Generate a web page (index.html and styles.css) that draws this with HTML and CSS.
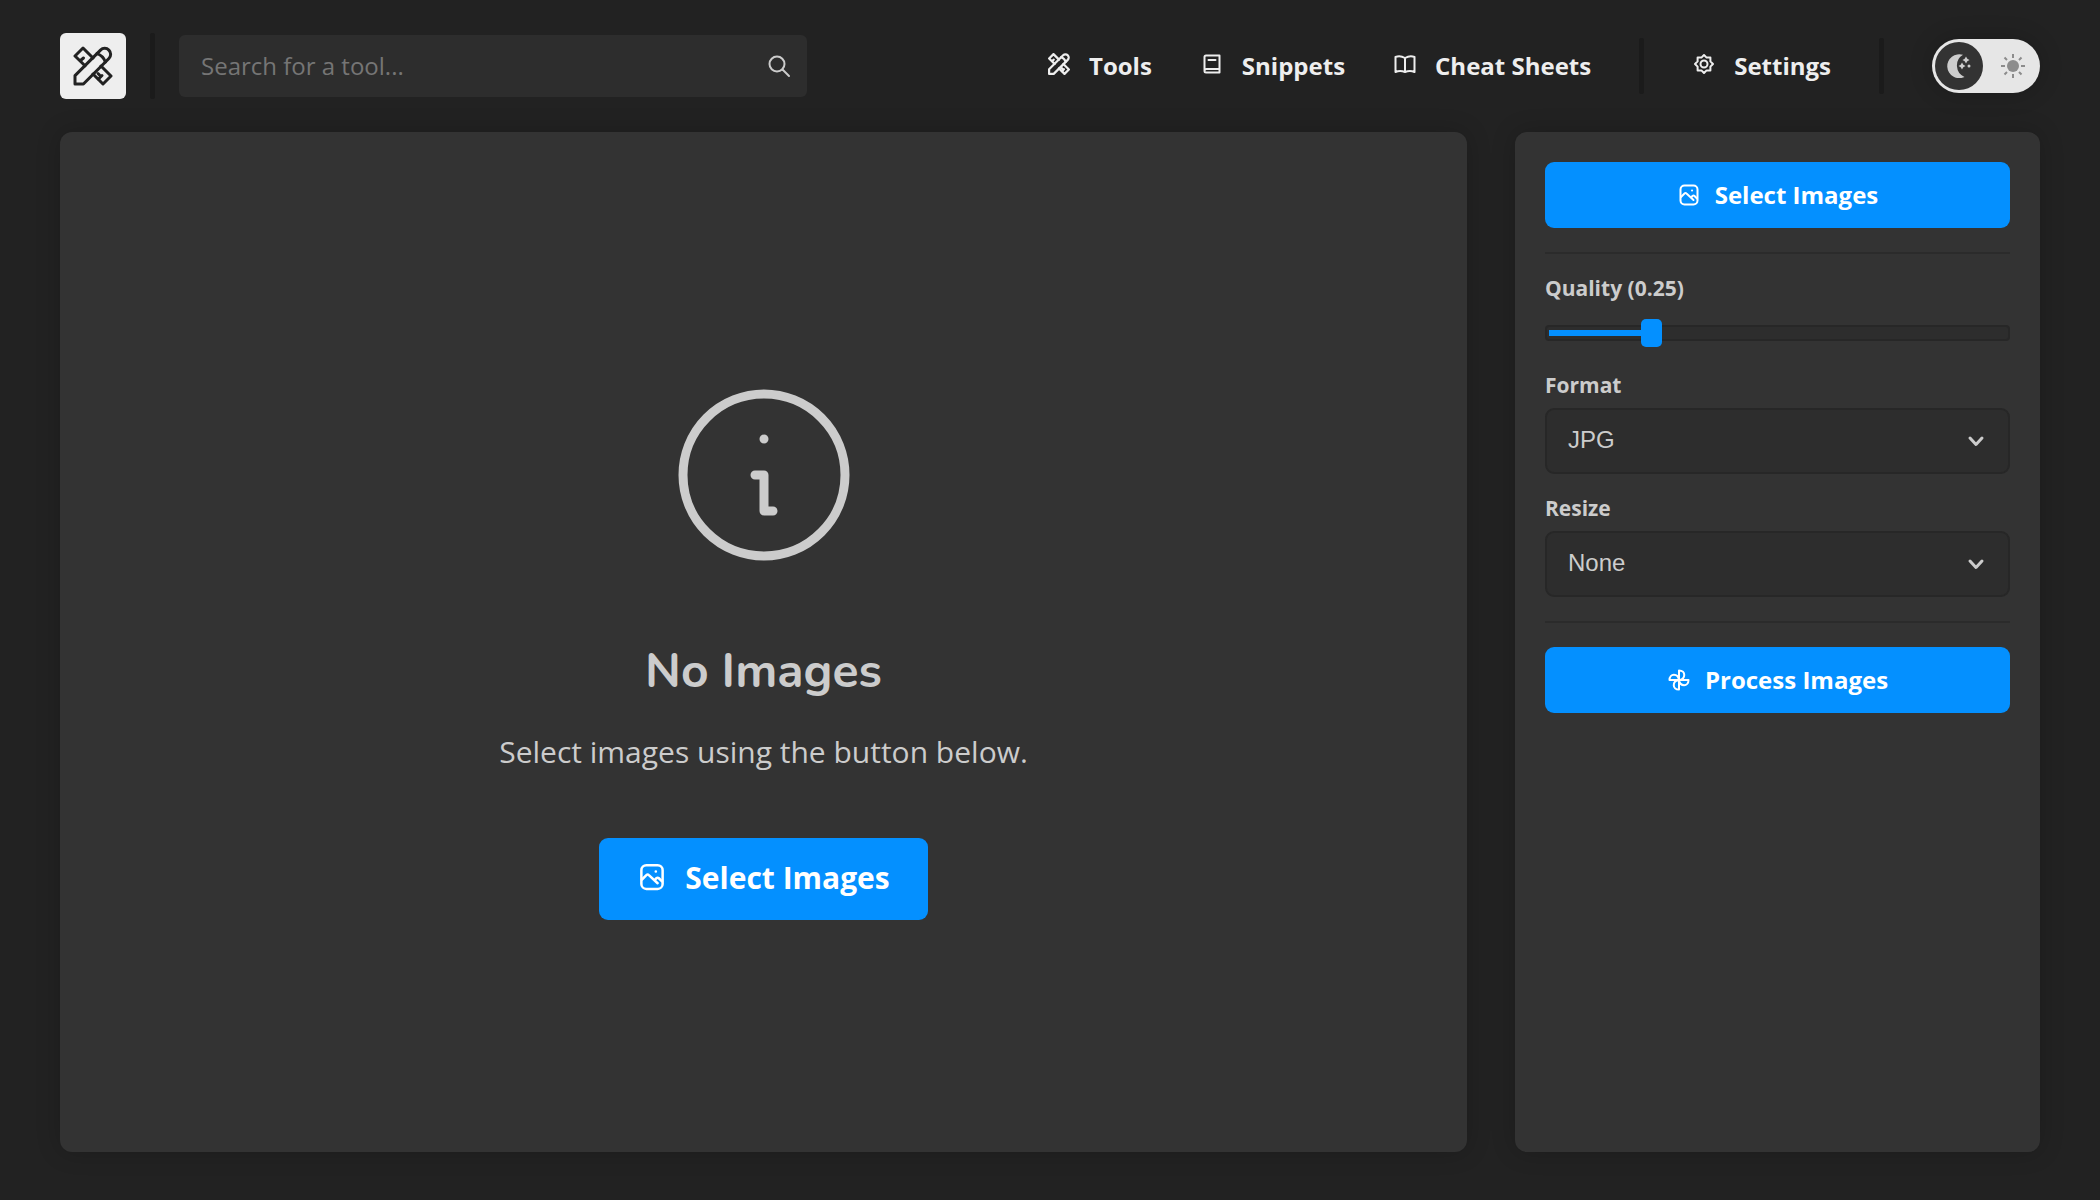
FILE: index.html
```html
<!DOCTYPE html>
<html lang="en">
<head>
<meta charset="utf-8">
<title>Image Converter</title>
<meta name="viewport" content="width=device-width, initial-scale=1">
<link rel="stylesheet" href="styles.css">
</head>
<body>
<svg class="sprite" aria-hidden="true">
  <symbol id="i-tools" viewBox="0 0 40 40">
    <path d="M2 38V29.600L27.500 4.100A5.900 5.900 0 0 1 35.900 12.500L10.400 38Z"/>
    <path d="M24 7.600Q30 9.500 32.400 16"/>
    <path d="M12 19.800L2 10L10 2L20 12"/>
    <path d="M28 20L38 30L30 38L20 28"/>
    <path d="M7.500 14.500L10.500 12M25.500 33L29 29.500M25 27.500L26.500 29"/>
  </symbol>
  <symbol id="i-book" viewBox="0 0 24 24">
    <path d="M4.500 19V5Q4.500 3.500 6 3.500H19.500V20.500H6Q4.500 20.500 4.500 19Q4.500 17 6.500 17H19.500M8.500 8H15.500"/>
  </symbol>
  <symbol id="i-open" viewBox="0 0 24 24">
    <path d="M12 6V20M12 6Q7 3 2.500 5V20Q7 18 12 20Q17 18 21.500 20V5Q17 3 12 6Z"/>
  </symbol>
  <symbol id="i-gear" viewBox="0 0 24 24">
    <circle cx="12" cy="12" r="3.500"/>
    <path d="M12 3L14.600 5.600L18.400 5.600L18.400 9.400L21 12L18.400 14.600L18.400 18.400L14.600 18.400L12 21L9.400 18.400L5.600 18.400L5.600 14.600L3 12L5.600 9.400L5.600 5.600L9.400 5.600Z"/>
  </symbol>
  <symbol id="i-image" viewBox="0 0 24 24">
    <rect x="3.500" y="2.500" width="17" height="19" rx="4"/>
    <path d="M4 14L7.500 10.500Q8.500 9.500 9.500 10.500L16.500 17M14 14.500L15.500 13Q16.500 12 17.500 13L20 15.500M15 7.500H15.100"/>
  </symbol>
  <symbol id="i-fan" viewBox="0 0 24 24">
    <path d="M12 12V2.500C19 2.500 19 11 12 12ZM12 12H21.500C21.500 19 13 19 12 12ZM12 12V21.500C5 21.500 5 13 12 12ZM12 12H2.500C2.500 5 11 5 12 12Z"/>
  </symbol>
  <symbol id="i-chevron" viewBox="0 0 24 24">
    <path d="M6 9L12 15.500L18 9"/>
  </symbol>
</svg>

<header class="header">
  <a class="logo" href="#" aria-label="Home"><svg class="logo-icon"><use href="#i-tools"/></svg></a>
  <span class="divider divider-tall"></span>
  <form class="search">
    <input class="search-input" type="text" placeholder="Search for a tool..." aria-label="Search for a tool">
    <button class="search-button" type="button" aria-label="Search">
      <svg class="search-icon" viewBox="0 0 24 24"><circle cx="10" cy="10" r="7.500"/><path d="M15.500 15.500L22 22"/></svg>
    </button>
  </form>
  <nav class="nav">
    <a class="nav-link" href="#"><svg class="icon icon-tools"><use href="#i-tools"/></svg>Tools</a>
    <a class="nav-link" href="#"><svg class="icon"><use href="#i-book"/></svg>Snippets</a>
    <a class="nav-link" href="#"><svg class="icon"><use href="#i-open"/></svg>Cheat Sheets</a>
    <span class="divider"></span>
    <a class="nav-link" href="#"><svg class="icon"><use href="#i-gear"/></svg>Settings</a>
    <span class="divider"></span>
    <button class="theme" type="button" aria-label="Toggle theme">
      <span class="theme-knob">
        <svg class="theme-icon" viewBox="0 0 24 24"><path d="M16 .800A12 12 0 1 0 17.500 23A12.500 12.500 0 0 1 16 .800Z"/><path d="M19 2.500L20.300 4.700L22.500 6L20.300 7.300L19 9.500L17.700 7.300L15.500 6L17.700 4.700ZM15 8.500L16.300 10.700L18.500 12L16.300 13.300L15 15.500L13.700 13.300L11.500 12L13.700 10.700Z"/><circle cx="22" cy="12" r="1.500"/></svg>
      </span>
      <svg class="theme-icon theme-sun" viewBox="0 0 24 24"><circle cx="12" cy="12" r="6"/><path class="rays" d="M12 0V4M12 20V24M0 12H4M20 12H24M3.500 3.500L6 6M18 18L20.500 20.500M3.500 20.500L6 18M18 6L20.500 3.500"/></svg>
    </button>
  </nav>
</header>

<div class="layout">
  <main class="panel empty">
    <svg class="empty-icon" viewBox="0 0 20 20"><circle cx="10" cy="10" r="9"/><path d="M10 6V6M9 10H10V14H11"/></svg>
    <h1 class="empty-title">No Images</h1>
    <p class="empty-text">Select images using the button below.</p>
    <button class="button button-large" type="button"><svg class="icon"><use href="#i-image"/></svg>Select Images</button>
  </main>
  <aside class="panel sidebar">
    <button class="button" type="button"><svg class="icon"><use href="#i-image"/></svg>Select Images</button>
    <hr class="rule">
    <label class="label" for="quality">Quality (0.25)</label>
    <input class="slider" id="quality" type="range" min="0.05" max="1" step="0.05" value="0.25">
    <label class="label" for="format">Format</label>
    <div class="select">
      <select class="select-input" id="format"><option>JPG</option><option>PNG</option><option>WEBP</option></select>
      <svg class="select-icon"><use href="#i-chevron"/></svg>
    </div>
    <label class="label" for="resize">Resize</label>
    <div class="select">
      <select class="select-input" id="resize"><option>None</option><option>Width</option><option>Height</option></select>
      <svg class="select-icon"><use href="#i-chevron"/></svg>
    </div>
    <hr class="rule">
    <button class="button" type="button"><svg class="icon"><use href="#i-fan"/></svg>Process Images</button>
  </aside>
</div>
</body>
</html>
```

FILE: styles.css
```css
* {
  box-sizing: border-box;
}

body {
  display: flex;
  flex-direction: column;
  min-height: 100vh;
  margin: 0;
  padding: 0 60px 48px;
  background: #222;
  color: #ccc;
  font-family: "Open Sans", "Noto Sans", sans-serif;
  font-size: 24px;
}

button,
input {
  font: inherit;
}

svg {
  flex: none;
  fill: none;
  stroke: currentColor;
  stroke-linecap: round;
  stroke-linejoin: round;
  stroke-width: 2;
}

.sprite {
  display: none;
}

.header {
  display: flex;
  align-items: center;
  gap: 24px;
  padding: 33px 0;
}

.logo {
  display: grid;
  place-items: center;
  width: 66px;
  height: 66px;
  border-radius: 6px;
  background: #eee;
  color: #222;
}

.logo-icon {
  width: 40px;
  height: 40px;
  stroke-width: 3;
}

.divider {
  width: 5px;
  height: 56px;
  border-radius: 2px;
  background: #1b1b1b;
}

.divider-tall {
  height: 66px;
}

.search {
  display: flex;
  align-items: center;
  width: 628px;
  height: 62px;
  border-radius: 6px;
  background: #2d2d2d;
}

.search-input {
  flex: 1;
  min-width: 0;
  padding: 0 22px 2px;
  border: 0;
  outline: 0;
  background: none;
  color: #ccc;
}

.search-input::placeholder {
  color: #757575;
}

.search-button {
  display: flex;
  padding: 0 16px;
  border: 0;
  background: none;
  color: #ccc;
}

.search-icon {
  width: 24px;
  height: 24px;
}

.nav {
  display: flex;
  align-items: center;
  gap: 48px;
  margin-left: auto;
}

.nav-link {
  display: flex;
  align-items: center;
  gap: 18px;
  padding-bottom: 2px;
  color: #eee;
  font-weight: 700;
  text-decoration: none;
}

.icon {
  width: 24px;
  height: 24px;
}

.nav-link .icon {
  margin-bottom: 2px;
}

.icon-tools {
  padding: 1px;
  stroke-width: 4;
}

.theme {
  display: flex;
  align-items: center;
  justify-content: space-between;
  width: 108px;
  height: 54px;
  padding: 0 15px 0 3px;
  border: 0;
  border-radius: 27px;
  background: #e6e6e6;
  box-shadow: 0 0 24px rgba(0, 0, 0, .2);
}

.theme-knob {
  display: grid;
  place-items: center;
  width: 48px;
  height: 48px;
  border-radius: 50%;
  background: #333;
  color: #ccc;
}

.theme-icon {
  width: 24px;
  height: 24px;
  fill: currentColor;
  stroke: none;
}

.theme-sun {
  color: #8c8c8c;
}

.rays {
  stroke: currentColor;
  stroke-linecap: butt;
}

.layout {
  display: grid;
  flex: 1;
  grid-template-columns: 1fr 525px;
  gap: 48px;
}

.panel {
  display: flex;
  flex-direction: column;
  border-radius: 12px;
  background: #333;
  box-shadow: 0 0 24px rgba(0, 0, 0, .2);
}

.empty {
  align-items: center;
  justify-content: center;
}

.empty-icon {
  width: 180px;
  height: 180px;
  margin-top: 20px;
  stroke-width: 1;
}

.empty-title {
  margin: 73px 0 0;
  font-family: Nunito, Lato, sans-serif;
  font-size: 48px;
  line-height: 66px;
}

.empty-text {
  margin: 28px 0 66px;
  font-size: 30px;
  line-height: 40px;
}

.button {
  display: flex;
  align-items: center;
  justify-content: center;
  gap: 14px;
  height: 66px;
  padding: 0 24px 2px;
  border: 0;
  border-radius: 9px;
  background: #0490ff;
  color: #fff;
  font-weight: 700;
}

.sidebar .icon {
  margin-top: 2px;
}

.button-large {
  gap: 18px;
  height: 82px;
  padding: 0 38px 3px;
  font-size: 30px;
}

.button-large .icon {
  width: 30px;
  height: 30px;
}

.sidebar {
  padding: 30px;
}

.rule {
  width: 100%;
  height: 2px;
  margin: 24px 0 22px;
  border: 0;
  background: #2b2b2b;
}

.rule + .button {
  margin-top: 2px;
}

.label {
  margin-bottom: 11px;
  font-size: 21px;
  font-weight: 700;
  line-height: 24px;
}

.slider {
  height: 16px;
  margin: 14px 0 32px;
  padding: 0 2px;
  border: 2px solid #272727;
  border-radius: 4px;
  background: #2d2d2d;
  appearance: none;
}

.slider::-webkit-slider-runnable-track {
  height: 6px;
  background: linear-gradient(#0490ff, #0490ff) no-repeat 0 0 / 22% 100%;
}

.slider::-webkit-slider-thumb {
  width: 21px;
  height: 28px;
  margin-top: -11px;
  border-radius: 5px;
  background: #0490ff;
  appearance: none;
}

.select {
  display: grid;
  align-items: center;
  margin-bottom: 22px;
}

.select + .rule {
  margin-top: 2px;
}

.select-input,
.select-icon {
  grid-area: 1 / 1;
}

.select-input {
  width: 100%;
  height: 66px;
  padding: 0 60px 4px 21px;
  border: 2px solid #272727;
  border-radius: 9px;
  background: #2d2d2d;
  color: #ccc;
  font: 24px "Liberation Sans", sans-serif;
  appearance: none;
}

.select-icon {
  justify-self: end;
  width: 24px;
  height: 24px;
  margin-right: 22px;
  stroke-width: 3;
  pointer-events: none;
}
```
